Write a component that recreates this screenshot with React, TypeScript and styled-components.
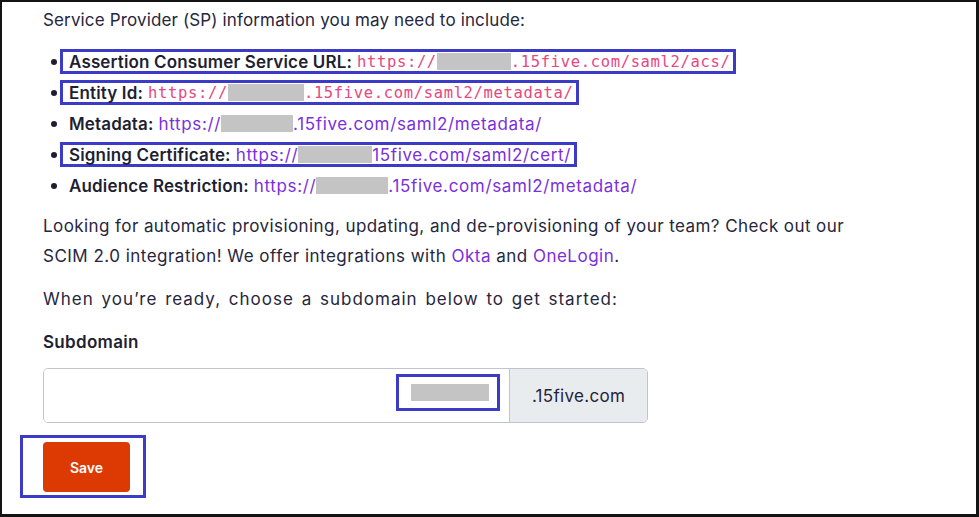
import React from "react";
import styled, { createGlobalStyle } from "styled-components";

const Global = createGlobalStyle`
  html, body { margin: 0; padding: 0; background: #ffffff; }
  body { font-family: "Inter", "Noto Sans", sans-serif; color: #23233b; }
  * { box-sizing: border-box; }
`;

const Frame = styled.div`
  width: 979px;
  height: 517px;
  border: 2px solid #141414;
  border-right-width: 3px;
  border-bottom-width: 3px;
  padding: 6px 0 0 41px;
  display: flex;
  flex-direction: column;
  background: #fff;
`;

const Text = styled.p<{ $top?: number; $ls?: number; $ws?: number }>`
  margin: ${(p) => p.$top ?? 0}px 0 0 0;
  font-size: 17px;
  line-height: ${(p) => (p.$top !== undefined ? 30 : 24)}px;
  letter-spacing: ${(p) => p.$ls ?? 0}px;
  word-spacing: ${(p) => p.$ws ?? 0}px;
  color: #26263e;
`;

const Line = styled.span<{ $ls: number; $ws?: number }>`
  letter-spacing: ${(p) => p.$ls}px;
  word-spacing: ${(p) => p.$ws ?? 0}px;
`;

const List = styled.ul`
  list-style: none;
  margin: 14px 0 0 0;
  padding: 0;
  display: flex;
  flex-direction: column;
`;

const Item = styled.li`
  display: flex;
  align-items: center;
  height: 31px;
`;

const Bullet = styled.span`
  width: 6px;
  height: 6px;
  border-radius: 50%;
  background: #1e1e30;
  margin: 0 3px 0 8px;
  flex: none;
`;

const Mark = styled.span<{ $on?: boolean }>`
  display: inline-flex;
  align-items: center;
  height: 25px;
  border: 3px solid ${(p) => (p.$on ? "#3b3bc8" : "transparent")};
  padding: 0 3px 0 6px;
  white-space: nowrap;
`;

const Label = styled.strong`
  font-weight: 600;
  font-size: 17px;
  color: #1f1f33;
  letter-spacing: 0.15px;
  margin-right: 5px;
`;

const Code = styled.code`
  font-family: "DejaVu Sans Mono", "Liberation Mono", monospace;
  font-size: 15.5px;
  letter-spacing: 0.65px;
  color: #e8477f;
  display: inline-flex;
  align-items: center;
`;

const Link = styled.a`
  color: #7a2fdc;
  text-decoration: none;
  display: inline-flex;
  align-items: center;
`;

const UrlLink = styled(Link)`
  font-size: 17px;
  letter-spacing: 0.65px;
`;

const Redact = styled.span<{ $w: number }>`
  display: inline-block;
  width: ${(p) => p.$w}px;
  height: 17px;
  background: #c4c4c4;
`;

const FieldLabel = styled.div`
  margin-top: 16px;
  font-size: 17px;
  font-weight: 600;
  line-height: 24px;
  letter-spacing: 0.3px;
  color: #1f1f33;
`;

const InputGroup = styled.div`
  margin-top: 14px;
  width: 605px;
  height: 55px;
  display: flex;
  border: 1px solid #c3c3cf;
  border-radius: 5px;
  overflow: hidden;
`;

const InputArea = styled.div`
  flex: 1;
  display: flex;
  justify-content: flex-end;
  align-items: center;
  padding: 0 9px 6px 0;
  background: #fff;
`;

const Annot = styled.div`
  width: 104px;
  height: 37px;
  border: 3px solid #3b3bc8;
  display: flex;
  align-items: center;
  justify-content: center;
  padding-left: 4px;
`;

const Addon = styled.div`
  width: 138px;
  border-left: 1px solid #c3c3cf;
  background: #e9ecef;
  display: flex;
  align-items: center;
  justify-content: center;
  font-size: 17px;
  letter-spacing: 0.3px;
  color: #23233b;
`;

const SaveMark = styled.div`
  margin: 12px 0 0 -23px;
  width: 126px;
  height: 63px;
  border: 3px solid #3b3bc8;
  padding: 4px 0 0 20px;
`;

const SaveButton = styled.button`
  width: 87px;
  height: 50px;
  border: none;
  border-radius: 4px;
  background: #dc3a02;
  color: #fff;
  font-family: "Inter", sans-serif;
  font-weight: 600;
  font-size: 14px;
  cursor: pointer;
`;

export default function App() {
  return (
    <>
      <Global />
      <Frame>
        <Text $ls={0.14}>Service Provider (SP) information you may need to include:</Text>
        <List>
          <Item>
            <Bullet />
            <Mark $on>
              <Label>Assertion Consumer Service URL:</Label>
              <Code>
                https://<Redact $w={74} />.15five.com/saml2/acs/
              </Code>
            </Mark>
          </Item>
          <Item>
            <Bullet />
            <Mark $on>
              <Label>Entity Id:</Label>
              <Code>
                https://<Redact $w={76} />.15five.com/saml2/metadata/
              </Code>
            </Mark>
          </Item>
          <Item>
            <Bullet />
            <Mark>
              <Label>Metadata:</Label>
              <UrlLink href="#">
                https://<Redact $w={72} />.15five.com/saml2/metadata/
              </UrlLink>
            </Mark>
          </Item>
          <Item>
            <Bullet />
            <Mark $on>
              <Label>Signing Certificate:</Label>
              <UrlLink href="#">
                https://<Redact $w={74} />15five.com/saml2/cert/
              </UrlLink>
            </Mark>
          </Item>
          <Item>
            <Bullet />
            <Mark>
              <Label>Audience Restriction:</Label>
              <UrlLink href="#">
                https://<Redact $w={72} />.15five.com/saml2/metadata/
              </UrlLink>
            </Mark>
          </Item>
        </List>
        <Text $top={10}>
          <Line $ls={0.42}>
            Looking for automatic provisioning, updating, and de-provisioning of your team? Check out our
          </Line>
          <br />
          <Line $ls={0.48}>
            SCIM 2.0 integration! We offer integrations with <Link href="#">Okta</Link> and{" "}
            <Link href="#">OneLogin</Link>.
          </Line>
        </Text>
        <Text $top={13} $ls={1.0} $ws={2}>
          When you’re ready, choose a subdomain below to get started:
        </Text>
        <FieldLabel>Subdomain</FieldLabel>
        <InputGroup>
          <InputArea>
            <Annot>
              <Redact $w={78} />
            </Annot>
          </InputArea>
          <Addon>.15five.com</Addon>
        </InputGroup>
        <SaveMark>
          <SaveButton>Save</SaveButton>
        </SaveMark>
      </Frame>
    </>
  );
}
